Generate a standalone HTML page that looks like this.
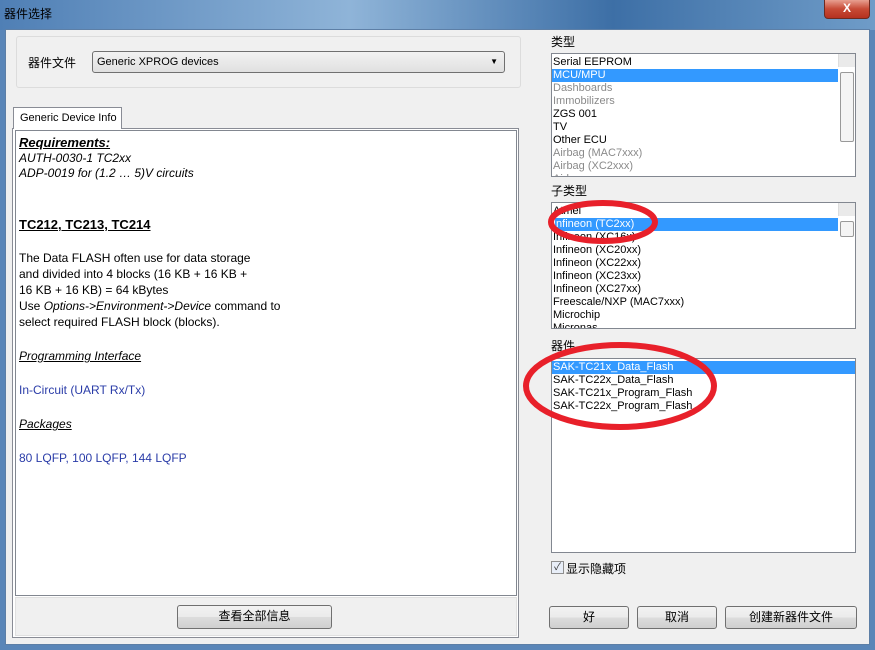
<!DOCTYPE html>
<html><head><meta charset="utf-8"><style>
*{margin:0;padding:0;box-sizing:border-box}
body{width:875px;height:650px;overflow:hidden;font-family:"Liberation Sans","Noto Sans CJK SC",sans-serif;font-size:12px;background:#5a86b8;position:relative}
.abs{position:absolute}
.title{left:0;top:0;width:875px;height:30px;background:linear-gradient(90deg,#4f7fb5,#8fb4d8 40%,#3d6fa6 70%,#6f9cc8);}
.client{left:5px;top:29px;width:865px;height:616px;background:#f0f0f0;border:1px solid #5d7fa6}
.list{background:#fff;border:1px solid #828790}
.list div{height:13px;line-height:13px;padding-left:1px;white-space:nowrap}
.sel{background:#3399ff;color:#fff}
.gray{color:#8a8a8a}
.btn{border:1px solid #707070;border-radius:3px;background:linear-gradient(#f2f2f2,#ebebeb 50%,#dddddd 51%,#cfcfcf);text-align:center;line-height:21px;font-size:12px}
.sb{position:absolute;right:0;top:0;width:17px;height:100%;background:#eaeaea;border-left:1px solid #ddd}
.t{position:absolute;left:19px;white-space:nowrap;font-size:12px}
.blue{color:#2a3ca8}
</style></head><body>
<div class="abs title"></div>
<div class="abs" style="left:4px;top:5px;color:#000;font-size:12px">器件选择</div>
<div class="abs" style="left:824px;top:0;width:46px;height:19px;background:linear-gradient(#e8a090,#c74a35 50%,#b53120);border:1px solid #6e2a20;border-top:none;border-radius:0 0 4px 4px;color:#fff;text-align:center;font-weight:bold;line-height:17px">X</div>
<div class="abs client"></div>
<div class="abs" style="left:16px;top:36px;width:505px;height:52px;border:1px solid #dcdcdc;border-radius:3px"></div>
<div class="abs" style="left:28px;top:54px">器件文件</div>
<div class="abs" style="left:92px;top:51px;width:413px;height:22px;border:1px solid #707070;border-radius:3px;background:linear-gradient(#f2f2f2,#e0e0e0);font-size:11px;line-height:20px;padding-left:4px">Generic XPROG devices<span style="position:absolute;right:6px;font-size:8px">▼</span></div>
<div class="abs" style="left:13px;top:107px;width:109px;height:22px;background:#fff;border:1px solid #898c95;border-bottom:none;font-size:11px;line-height:20px;padding-left:6px;z-index:2">Generic Device Info</div>
<div class="abs" style="left:12px;top:128px;width:507px;height:510px;border:1px solid #898c95;background:#fff"></div>
<div class="abs" style="left:15px;top:130px;width:502px;height:466px;border:1px solid #828790;background:#fff"></div>
<div class="abs" style="left:15px;top:597px;width:502px;height:39px;background:#f0f0f0;border:1px solid #e0e0e0"></div>
<div class="t" style="top:135px;font-weight:bold;font-style:italic;text-decoration:underline;font-size:13px">Requirements:</div>
<div class="t" style="top:151px;font-style:italic">AUTH-0030-1 TC2xx</div>
<div class="t" style="top:166px;font-style:italic">ADP-0019 for (1.2 … 5)V circuits</div>
<div class="t" style="top:217px;font-weight:bold;text-decoration:underline;font-size:13px">TC212, TC213, TC214</div>
<div class="t" style="top:251px">The Data FLASH often use for data storage</div>
<div class="t" style="top:267px">and divided into 4 blocks (16 KB + 16 KB +</div>
<div class="t" style="top:283px">16 KB + 16 KB) = 64 kBytes</div>
<div class="t" style="top:299px">Use <i>Options-&gt;Environment-&gt;Device</i> command to</div>
<div class="t" style="top:315px">select required FLASH block (blocks).</div>
<div class="t" style="top:349px;font-style:italic;text-decoration:underline">Programming Interface</div>
<div class="t blue" style="top:383px">In-Circuit (UART Rx/Tx)</div>
<div class="t" style="top:417px;font-style:italic;text-decoration:underline">Packages</div>
<div class="t blue" style="top:451px">80 LQFP, 100 LQFP, 144 LQFP</div>
<div class="abs btn" style="left:177px;top:605px;width:155px;height:24px">查看全部信息</div>

<div class="abs" style="left:551px;top:33px">类型</div>
<div class="abs list" style="left:551px;top:53px;width:305px;height:124px;overflow:hidden;padding-top:2px;font-size:11px">
<div>Serial EEPROM</div><div class="sel" style="margin-right:17px">MCU/MPU</div><div class="gray">Dashboards</div><div class="gray">Immobilizers</div><div>ZGS 001</div><div>TV</div><div>Other ECU</div><div class="gray">Airbag (MAC7xxx)</div><div class="gray">Airbag (XC2xxx)</div><div class="gray">Airbag</div>
<div class="sb"><div style="position:absolute;top:18px;left:1px;width:14px;height:70px;border:1px solid #999;border-radius:2px;background:#f4f4f4"></div></div></div>
<div class="abs" style="left:551px;top:182px">子类型</div>
<div class="abs list" style="left:551px;top:202px;width:305px;height:127px;overflow:hidden;padding-top:2px;font-size:11px">
<div>Atmel</div><div class="sel" style="margin-right:17px">Infineon (TC2xx)</div><div>Infineon (XC16x)</div><div>Infineon (XC20xx)</div><div>Infineon (XC22xx)</div><div>Infineon (XC23xx)</div><div>Infineon (XC27xx)</div><div>Freescale/NXP (MAC7xxx)</div><div>Microchip</div><div>Micronas</div>
<div class="sb"><div style="position:absolute;top:18px;left:1px;width:14px;height:16px;border:1px solid #999;border-radius:2px;background:#f4f4f4"></div></div></div>
<div class="abs" style="left:551px;top:337px">器件</div>
<div class="abs list" style="left:551px;top:358px;width:305px;height:195px;padding-top:2px;font-size:11px">
<div class="sel">SAK-TC21x_Data_Flash</div><div>SAK-TC22x_Data_Flash</div><div>SAK-TC21x_Program_Flash</div><div>SAK-TC22x_Program_Flash</div></div>
<div class="abs" style="left:551px;top:561px;width:13px;height:13px;border:1px solid #8f8f8f;background:#e8eef8;font-size:10px;line-height:11px;text-align:center;color:#333">✓</div>
<div class="abs" style="left:566px;top:560px">显示隐藏项</div>
<div class="abs btn" style="left:549px;top:606px;width:80px;height:23px">好</div>
<div class="abs btn" style="left:637px;top:606px;width:80px;height:23px">取消</div>
<div class="abs btn" style="left:725px;top:606px;width:132px;height:23px">创建新器件文件</div>
<svg class="abs" style="left:0;top:0" width="875" height="650">
<ellipse cx="603" cy="222" rx="52" ry="19" fill="none" stroke="#e8202a" stroke-width="6"/>
<ellipse cx="620" cy="386" rx="94" ry="41" fill="none" stroke="#e8202a" stroke-width="6"/>
</svg>
</body></html>
